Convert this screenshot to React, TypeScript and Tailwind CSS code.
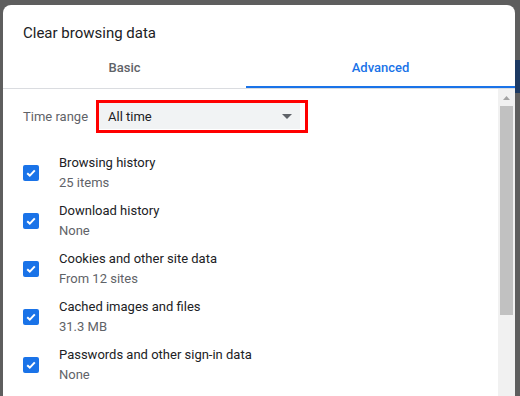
import React from "react";

const items = [
  { label: "Browsing history", sub: "25 items" },
  { label: "Download history", sub: "None" },
  { label: "Cookies and other site data", sub: "From 12 sites" },
  { label: "Cached images and files", sub: "31.3 MB" },
  { label: "Passwords and other sign-in data", sub: "None" },
];

function Checkbox() {
  return (
    <div className="w-[16px] h-[16px] rounded-[2px] bg-[#1a73e8] flex items-center justify-center shrink-0">
      <svg width="12" height="12" viewBox="0 0 12 12" fill="none">
        <path d="M2.2 6.2 L4.8 8.6 L9.8 3.4" stroke="#fff" strokeWidth="2" />
      </svg>
    </div>
  );
}

export default function App() {
  return (
    <div
      className="w-[520px] h-[396px] bg-[#5e5e5e] flex overflow-hidden"
      style={{ fontFamily: "Roboto, 'Liberation Sans', sans-serif" }}
    >
      {/* left strip of page behind */}
      <div className="w-[3px] shrink-0" />

      {/* DIALOG */}
      <div className="w-[512px] h-[391px] mt-[5px] bg-white rounded-t-[8px] flex flex-col shrink-0">
        <div className="pl-[20px] pt-[18px] h-[45px] text-[15px] leading-[20px] text-[#202124]">
          Clear browsing data
        </div>

        {/* Tabs */}
        <div className="flex border-b border-[#dadce0]">
          <div className="w-[243px] h-[38px] flex items-center justify-center pb-[2px] text-[13px] font-medium text-[#5f6368]">
            Basic
          </div>
          <div className="flex-1 h-[38px] flex items-center justify-center border-b-2 border-[#1a73e8] text-[13px] font-medium text-[#1a73e8]">
            Advanced
          </div>
        </div>

        {/* Scroll area */}
        <div className="flex flex-1 min-h-0">
          <div className="flex-1 pl-[20px] pt-[11px]">
            <div className="flex items-center h-[33px]">
              <span className="text-[13px] text-[#5f6368] w-[73px] whitespace-nowrap shrink-0 pt-[1px]">
                Time range
              </span>
              <div className="border-[3px] border-[#ff0000] pr-[5px] h-[33px] flex items-stretch">
                <div className="w-[201px] bg-[#f1f3f4] flex items-center justify-between pl-[9px] pr-[8px] mb-[1px]">
                  <span className="text-[13px] text-[#202124] pt-[1px]">All time</span>
                  <svg width="10" height="5" viewBox="0 0 10 5">
                    <path d="M0 0 H10 L5 5 Z" fill="#5f6368" />
                  </svg>
                </div>
              </div>
            </div>

            <div className="mt-[16px] flex flex-col">
              {items.map((it) => (
                <div key={it.label} className="h-[48px] flex items-center gap-[20px]">
                  <Checkbox />
                  <div className="flex flex-col text-[13px] leading-[20px]">
                    <span className="text-[#202124]">{it.label}</span>
                    <span className="text-[#5f6368]">{it.sub}</span>
                  </div>
                </div>
              ))}
            </div>
          </div>

          {/* Scrollbar */}
          <div className="w-[17px] bg-[#f1f1f1] flex flex-col items-center shrink-0">
            <svg width="7" height="4" viewBox="0 0 7 4" className="mt-[7px]">
              <path d="M0 4 L3.5 0 L7 4 Z" fill="#a3a3a3" />
            </svg>
            <div className="mt-[6px] w-[13px] h-[209px] bg-[#c1c1c1]" />
          </div>
        </div>
      </div>

      {/* right strip of page behind */}
      <div className="flex-1 flex flex-col">
        <div className="mt-[60px] h-[33px] bg-[#1d3a63]" />
      </div>
    </div>
  );
}
